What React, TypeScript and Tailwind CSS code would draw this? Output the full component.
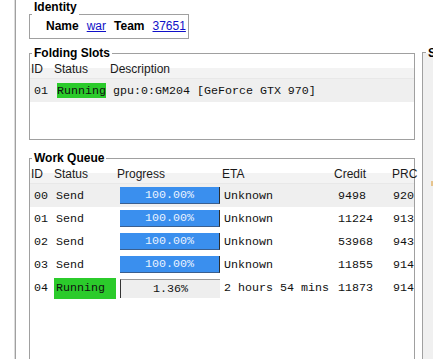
import React from "react";

const sans = "font-['Liberation_Sans',Arial,sans-serif]";
const mono = "font-['Liberation_Mono','Courier_New',monospace] text-[11.67px] leading-[14px] text-[#111]";

function Title({ children, className = "" }: { children: React.ReactNode; className?: string }) {
  return (
    <div className={`ml-[2px] w-fit shrink-0 px-[2px] font-bold leading-[14px] ${className}`}>{children}</div>
  );
}

function Header({ cols }: { cols: { label: string; w: string; pl: string }[] }) {
  return (
    <div className="flex h-[19px] shrink-0 items-center border-b border-[#e8e8e8] bg-[linear-gradient(#ffffff_0%,#ffffff_45%,#f3f3f3_45%,#f3f3f3_100%)] text-[#1a1a1a]">
      {cols.map((c) => (
        <div key={c.label} className={`${c.w} ${c.pl} shrink-0 whitespace-nowrap`}>
          {c.label}
        </div>
      ))}
    </div>
  );
}

type Row = { id: string; status: string; running: boolean; progress: string; full: boolean; eta: string; credit: string; prc: string };

const rows: Row[] = [
  { id: "00", status: "Send", running: false, progress: "100.00%", full: true, eta: "Unknown", credit: "9498", prc: "920" },
  { id: "01", status: "Send", running: false, progress: "100.00%", full: true, eta: "Unknown", credit: "11224", prc: "913" },
  { id: "02", status: "Send", running: false, progress: "100.00%", full: true, eta: "Unknown", credit: "53968", prc: "943" },
  { id: "03", status: "Send", running: false, progress: "100.00%", full: true, eta: "Unknown", credit: "11855", prc: "914" },
  { id: "04", status: "Running", running: true, progress: "1.36%", full: false, eta: "2 hours 54 mins", credit: "11873", prc: "914" },
];

export default function App() {
  return (
    <div className={`flex h-[359px] w-[433px] overflow-hidden bg-white text-[12px] leading-[14px] text-black ${sans}`}>
      <div className="w-[14px] shrink-0" />
      <div className="w-[2px] shrink-0 border-l border-r border-l-[#dcdcdc] border-r-[#a0a0a0]" />

      <div className="flex w-[406px] shrink-0 flex-col pl-[13px]">
        {/* Identity */}
        <div className="mt-[14px] flex w-[160px] shrink-0 flex-col border border-[#a0a0a0] pb-[5px]">
          <Title className="-mt-[15px] h-[15px] bg-white">Identity</Title>
          <div className="mt-[4px] flex shrink-0 gap-2 pl-[16px]">
            <span className="font-bold">Name</span>
            <span className="text-[#1010c8] underline">war</span>
            <span className="font-bold">Team</span>
            <span className="text-[#1010c8] underline">37651</span>
          </div>
        </div>

        {/* Folding Slots */}
        <div className="mt-[14px] flex h-[87px] w-[386px] shrink-0 flex-col border border-[#a0a0a0]">
          <Title className="-mt-[8px] h-[14px] bg-white">Folding Slots</Title>
          <Header
            cols={[
              { label: "ID", w: "w-[24px]", pl: "pl-[1px]" },
              { label: "Status", w: "w-[56px]", pl: "pl-0" },
              { label: "Description", w: "w-[200px]", pl: "pl-0" },
            ]}
          />
          <div className={`flex h-[23px] shrink-0 items-center bg-[#efefef] ${mono}`}>
            <div className="w-[24px] shrink-0 pl-[4px]">01</div>
            <div className="w-[56px] shrink-0 pl-[3px]">
              <span className="flex h-[15px] w-fit items-center bg-[#2bcb2b]">Running</span>
            </div>
            <div className="shrink-0 whitespace-nowrap pl-[3px]">gpu:0:GM204 [GeForce GTX 970]</div>
          </div>
        </div>

        {/* Work Queue */}
        <div className="mt-[18px] flex h-[230px] w-[386px] shrink-0 flex-col border border-[#a0a0a0]">
          <Title className="-mt-[8px] h-[14px] bg-white">Work Queue</Title>
          <Header
            cols={[
              { label: "ID", w: "w-[24px]", pl: "pl-[1px]" },
              { label: "Status", w: "w-[63px]", pl: "pl-0" },
              { label: "Progress", w: "w-[104px]", pl: "pl-0" },
              { label: "ETA", w: "w-[113px]", pl: "pl-[1px]" },
              { label: "Credit", w: "w-[58px]", pl: "pl-0" },
              { label: "PRC", w: "w-[22px]", pl: "pl-0" },
            ]}
          />
          <div className="flex shrink-0 flex-col overflow-hidden">
            {rows.map((r, i) => (
              <div key={r.id} className={`flex h-[23px] shrink-0 items-center ${i === 0 ? "bg-[#efefef]" : "bg-white"} ${mono}`}>
                <div className="w-[24px] shrink-0 pl-[4px]">{r.id}</div>
                <div className="flex h-full w-[63px] shrink-0 items-center">
                  {r.running ? (
                    <div className="mt-[1px] flex h-[21px] w-[62px] items-center bg-[#2bcb2b] pl-[2px]">{r.status}</div>
                  ) : (
                    <div className="pl-[2px]">{r.status}</div>
                  )}
                </div>
                <div className="flex h-full w-[104px] shrink-0 items-center pl-[3px]">
                  {r.full ? (
                    <div className="flex h-[17px] w-[100px] items-center justify-center border-r border-b border-r-[#2e2e2e] border-b-[#3a5f8f] bg-[#3a8fee] text-[#e9f3ff]">
                      {r.progress}
                    </div>
                  ) : (
                    <div className="mt-[2px] flex h-[19px] w-[100px] items-center justify-center border-l border-t border-l-[#333333] border-t-[#9a9a9a] bg-[#eeeeee]">
                      {r.progress}
                    </div>
                  )}
                </div>
                <div className="w-[113px] shrink-0 whitespace-nowrap pl-[3px]">{r.eta}</div>
                <div className="w-[58px] shrink-0 pl-[4px]">{r.credit}</div>
                <div className="w-[22px] shrink-0 overflow-hidden whitespace-nowrap pl-[1px]">{r.prc}</div>
              </div>
            ))}
          </div>
        </div>
      </div>

      {/* Right panel */}
      <div className="mt-[52px] flex h-[330px] flex-1 shrink-0 flex-col border-l border-t border-[#a0a0a0] bg-[#f0f0f0]">
        <Title className="-mt-[7px] ml-[3px] h-[14px] bg-[linear-gradient(#ffffff_50%,#f0f0f0_50%)] px-[1px]">S</Title>
        <div className="ml-[8px] mt-[121px] h-[5px] w-[2px] shrink-0 bg-[#e6c48e]" />
      </div>
    </div>
  );
}
